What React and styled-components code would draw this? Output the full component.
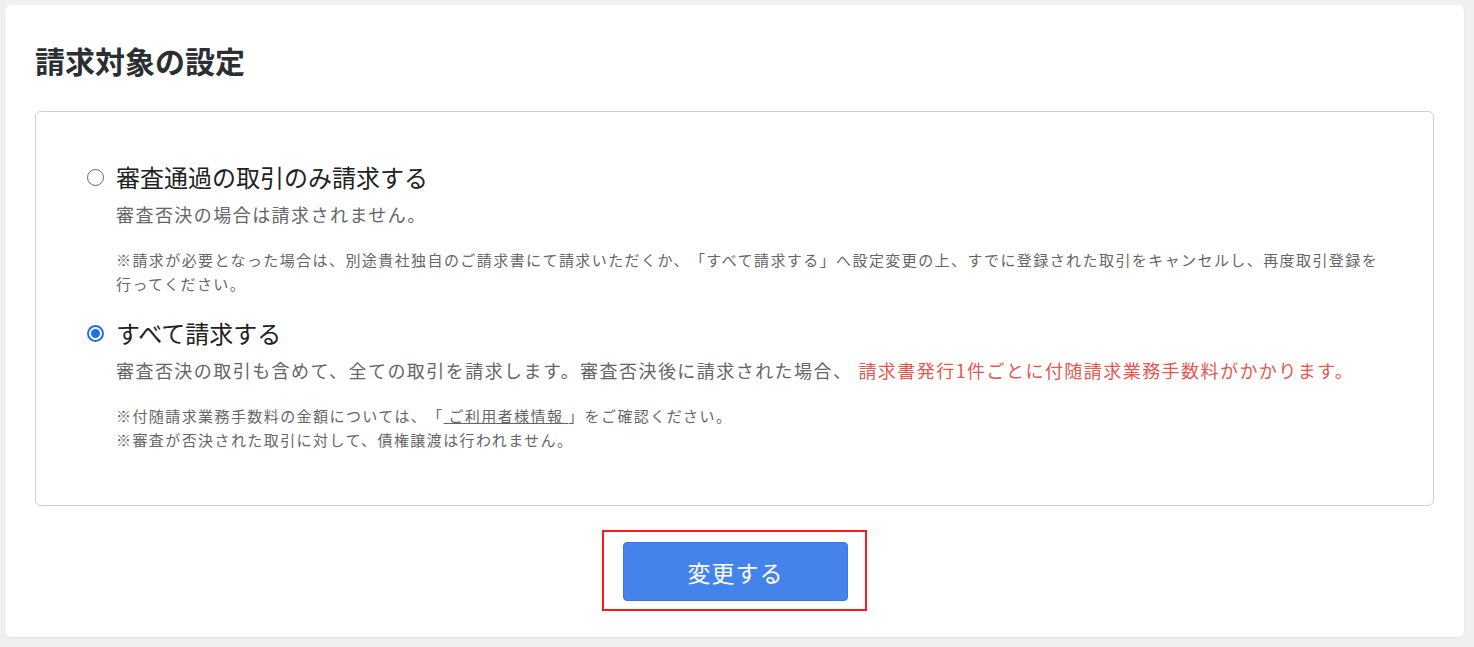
import React, { useState } from 'react';
import styled, { createGlobalStyle } from 'styled-components';

const GlobalStyle = createGlobalStyle`
  body {
    margin: 0;
    background: #f0f0f2;
    font-family: "Noto Sans CJK JP", "Noto Sans", sans-serif;
    color: #333;
    text-spacing-trim: space-all;
  }
`;

const Page = styled.div`
  padding: 5px 10px 10px 5px;
`;

const Card = styled.section`
  background: #fff;
  border-radius: 6px;
  box-shadow: 0 1px 2px rgba(0, 0, 0, 0.06);
  padding: 34px 30px 26px;
`;

const Title = styled.h2`
  margin: 0 0 30px;
  font-size: 30px;
  font-weight: 700;
  line-height: 42px;
  color: #2b2f33;
`;

const OptionBox = styled.div`
  border: 1px solid #cfcfcf;
  border-radius: 6px;
  padding: 48px 50px 54px;
`;

const Option = styled.div`
  & + & {
    margin-top: 21px;
  }
`;

const OptionLabel = styled.label`
  display: flex;
  align-items: center;
  gap: 12px;
  cursor: pointer;
  font-size: 24px;
  line-height: 34px;
  color: #222;
`;

const Radio = styled.span`
  box-sizing: border-box;
  width: 17px;
  height: 17px;
  border-radius: 50%;
  border: ${({ $checked }) => ($checked ? '2px solid #1a73e8' : '1.5px solid #666')};
  display: flex;
  align-items: center;
  justify-content: center;
  margin-left: 1px;

  &::after {
    content: '';
    width: 9px;
    height: 9px;
    border-radius: 50%;
    background: ${({ $checked }) => ($checked ? '#1a73e8' : 'transparent')};
  }
`;

const Body = styled.div`
  padding-left: 30px;
`;

const Description = styled.p`
  margin: 6px 0 0;
  font-size: 18px;
  line-height: 28px;
  letter-spacing: 1.45px;
  color: #666;
`;

const Warn = styled.span`
  color: #e5584f;
  margin-left: 6px;
`;

const Notes = styled.div`
  margin-top: 20px;
  font-size: 15px;
  line-height: 23.5px;
  letter-spacing: 1.42px;
  color: #666;
`;

const NoteLine = styled.div``;

const Link = styled.a`
  color: #666;
  text-decoration: underline;
`;

const Actions = styled.div`
  display: flex;
  justify-content: center;
  margin-top: 24px;
`;

const Highlight = styled.div`
  border: 2px solid #ff1a1a;
  padding: 10px 17px 8px 19px;
`;

const SubmitButton = styled.button`
  width: 225px;
  height: 59px;
  border: 1px solid #3a76dc;
  border-radius: 4px;
  background: #4483ea;
  color: #fff;
  font-family: inherit;
  font-size: 23px;
  letter-spacing: 1px;
  cursor: pointer;
`;

export default function App() {
  const [target, setTarget] = useState('all');

  return (
    <>
      <GlobalStyle />
      <Page>
        <Card>
          <Title>請求対象の設定</Title>
          <OptionBox>
            <Option>
              <OptionLabel onClick={() => setTarget('passed')}>
                <Radio $checked={target === 'passed'} />
                審査通過の取引のみ請求する
              </OptionLabel>
              <Body>
                <Description>審査否決の場合は請求されません。</Description>
                <Notes>
                  <NoteLine>
                    ※請求が必要となった場合は、別途貴社独自のご請求書にて請求いただくか、「すべて請求する」へ設定変更の上、すでに登録された取引をキャンセルし、再度取引登録を行ってください。
                  </NoteLine>
                </Notes>
              </Body>
            </Option>
            <Option>
              <OptionLabel onClick={() => setTarget('all')}>
                <Radio $checked={target === 'all'} />
                すべて請求する
              </OptionLabel>
              <Body>
                <Description>
                  審査否決の取引も含めて、全ての取引を請求します。審査否決後に請求された場合、
                  <Warn>請求書発行1件ごとに付随請求業務手数料がかかります。</Warn>
                </Description>
                <Notes>
                  <NoteLine>
                    ※付随請求業務手数料の金額については、「<Link href="#"> ご利用者様情報 </Link>」をご確認ください。
                  </NoteLine>
                  <NoteLine>※審査が否決された取引に対して、債権譲渡は行われません。</NoteLine>
                </Notes>
              </Body>
            </Option>
          </OptionBox>
          <Actions>
            <Highlight>
              <SubmitButton type="button">変更する</SubmitButton>
            </Highlight>
          </Actions>
        </Card>
      </Page>
    </>
  );
}
